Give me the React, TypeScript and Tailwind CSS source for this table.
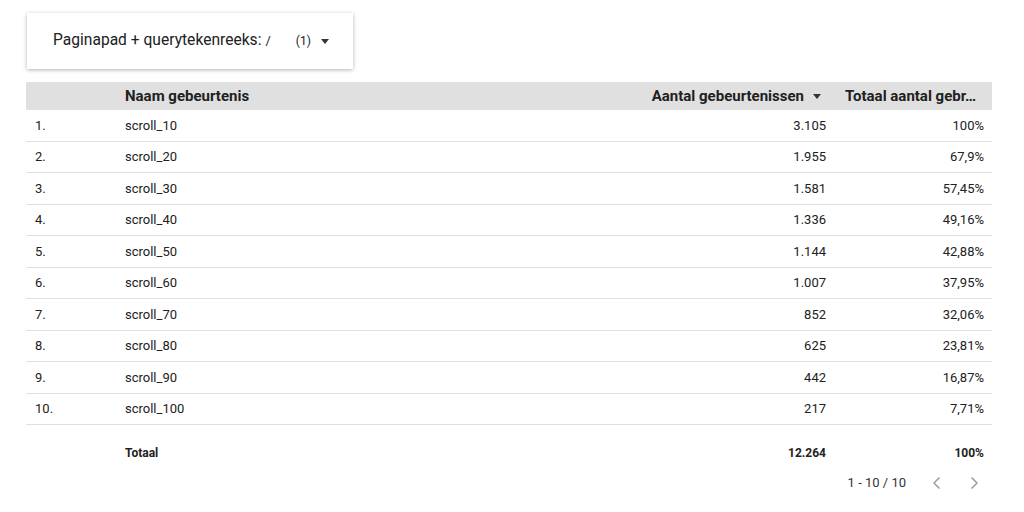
import React from "react";

const rows = [
  ["scroll_10", "3.105", "100%"],
  ["scroll_20", "1.955", "67,9%"],
  ["scroll_30", "1.581", "57,45%"],
  ["scroll_40", "1.336", "49,16%"],
  ["scroll_50", "1.144", "42,88%"],
  ["scroll_60", "1.007", "37,95%"],
  ["scroll_70", "852", "32,06%"],
  ["scroll_80", "625", "23,81%"],
  ["scroll_90", "442", "16,87%"],
  ["scroll_100", "217", "7,71%"],
];

const Caret = () => (
  <svg width="8" height="5" viewBox="0 0 8 5" className="fill-[#333]">
    <path d="M0 0h8L4 5z" />
  </svg>
);

const App: React.FC = () => {
  return (
    <div className="w-[1024px] h-[512px] bg-white text-[#212121] font-['Roboto',sans-serif] overflow-hidden">
      <div className="pl-[27px] pt-[13px]">
        <div className="w-[326px] h-[56px] bg-white shadow-[0_1px_4px_rgba(0,0,0,0.3)] flex items-center pl-[26px]">
          <span className="text-[15.6px]">Paginapad + querytekenreeks:</span>
          <span className="text-[13px] ml-[4px]">/</span>
          <span className="text-[12px] ml-[25px]">(1)</span>
          <span className="ml-[10px]">
            <Caret />
          </span>
        </div>
      </div>

      <div className="ml-[26px] mt-[13px] w-[966px]">
        <div className="h-[28px] bg-[#e0e0e0] flex items-center text-[15px] font-bold">
          <div className="w-[99px]" />
          <div className="flex-1">Naam gebeurtenis</div>
          <div className="flex items-center gap-[9px] pr-[16px]">
            Aantal gebeurtenissen
            <Caret />
          </div>
          <div className="w-[155px] pl-[8px] whitespace-nowrap overflow-hidden">Totaal aantal gebr…</div>
        </div>

        {rows.map((r, i) => (
          <div
            key={r[0]}
            className="h-[31.5px] border-b border-[#e0e0e0] flex items-center text-[13px]"
          >
            <div className="w-[99px] pl-[9px]">{i + 1}.</div>
            <div className="flex-1">{r[0]}</div>
            <div className="w-[200px] text-right">{r[1]}</div>
            <div className="w-[166px] text-right pr-[8px]">{r[2]}</div>
          </div>
        ))}

        <div className="h-[55px] flex items-center text-[12px] font-bold">
          <div className="w-[99px]" />
          <div className="flex-1">Totaal</div>
          <div className="w-[200px] text-right">12.264</div>
          <div className="w-[166px] text-right pr-[8px]">100%</div>
        </div>

        <div className="flex items-center justify-end text-[13px] text-[#333] -mt-[7px]">
          <span>1 - 10 / 10</span>
          <svg width="9" height="14" viewBox="0 0 9 14" className="ml-[26px] stroke-[#9e9e9e]" fill="none" strokeWidth="1.5">
            <path d="M7.5 1.5L2 7l5.5 5.5" />
          </svg>
          <svg width="9" height="14" viewBox="0 0 9 14" className="ml-[29px] mr-[13px] stroke-[#9e9e9e]" fill="none" strokeWidth="1.5">
            <path d="M1.5 1.5L7 7l-5.5 5.5" />
          </svg>
        </div>
      </div>
    </div>
  );
};

export default App;
